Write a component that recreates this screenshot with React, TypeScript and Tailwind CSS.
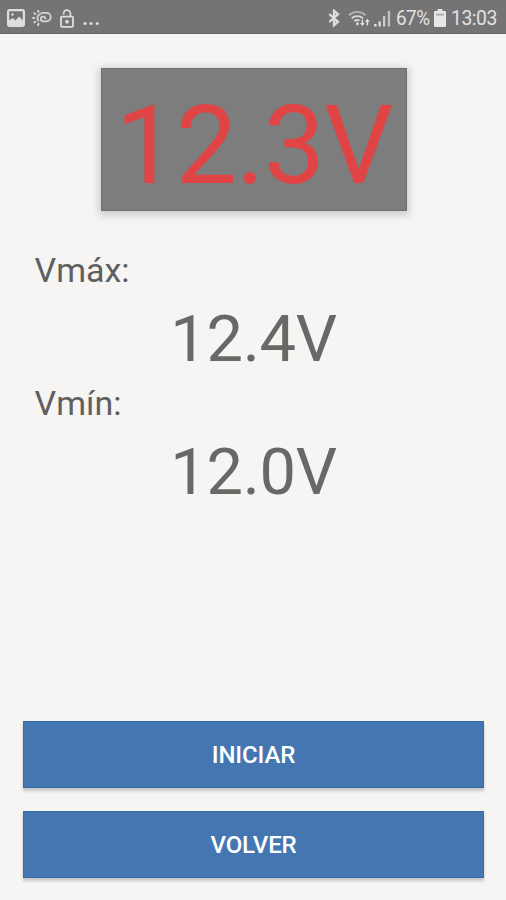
import React from 'react';

interface ReadingProps {
  label: string;
  value: string;
}

const PictureIcon = () => (
  <svg width="18" height="18" viewBox="0 0 18 18" fill="none">
    <rect x="1.1" y="1.1" width="15.8" height="15.8" rx="1.6" stroke="#dedede" strokeWidth="2.2" />
    <path d="M2 16v-4.5L6 9l2.5 2.5L12 7.5l4 4V16z" fill="#dedede" />
    <circle cx="5.5" cy="5.5" r="1.2" fill="#dedede" />
  </svg>
);

const WeatherIcon = () => (
  <svg width="20" height="18" viewBox="0 0 20 18" fill="none" stroke="#d6d6d6" strokeLinecap="round">
    <path d="M9.5 3.9h5a4.2 4.2 0 0 1 0 8.4h-3.3a2.3 2.3 0 1 1 2.2-2.8" strokeWidth="1.8" />
    <path d="M8.2 5.2a4 4 0 0 0-1.9 6.4" strokeWidth="1.8" />
    <path d="M6 1.8l.5 1M2.3 4.3l1 .7M1 9h1.2M2.3 13.5l1-.8M6 16l.5-1.1" strokeWidth="2" />
  </svg>
);

const UnlockIcon = () => (
  <svg width="14" height="19" viewBox="0 0 14 19" fill="none" stroke="#dedede">
    <path d="M3.6 5.4V4.5a3.4 3.4 0 0 1 6.8 0V7.5" strokeWidth="1.7" />
    <rect x="1" y="7.6" width="12" height="10.2" rx="1" strokeWidth="1.8" />
    <rect x="5.4" y="11" width="3.2" height="3.4" rx="1" fill="#dedede" stroke="none" />
  </svg>
);

const BluetoothIcon = () => (
  <svg width="12" height="18" viewBox="0 0 12 18" fill="none" stroke="#dedede" strokeWidth="2.3">
    <path d="M1.3 5l8.7 7.8-4 3.5V1.7l4 3.5L1.3 13" />
  </svg>
);

const WifiIcon = () => (
  <svg width="23" height="18" viewBox="0 0 23 18" fill="none">
    <path d="M1 6.2a12 12 0 0 1 16.5 0" stroke="#b5b5b5" strokeWidth="1.9" />
    <path d="M3.7 9.3a8.2 8.2 0 0 1 11.2 0M6.4 12.2a4.4 4.4 0 0 1 5 -.6" stroke="#d8d8d8" strokeWidth="1.9" />
    <circle cx="9.4" cy="14.8" r="1.5" fill="#d8d8d8" />
    <path d="M14.4 10.5v5M19.4 16.5v-5" stroke="#e2e2e2" strokeWidth="1.5" />
    <path d="M12 14h4.8l-2.4 3zM17 12.8h4.8l-2.4-3z" fill="#e2e2e2" />
  </svg>
);

const SignalIcon = () => (
  <svg width="18" height="17" viewBox="0 0 18 17">
    <path d="M1 16.5v-2.6h2.6v2.6zM5.5 16.5v-5h2.3v5z" fill="#dedede" />
    <path d="M10 16.5V6h2.3v10.5z" fill="#c9c9c9" />
    <path d="M14.8 16.5V1h2.3v15.5z" fill="#c2c2c2" />
  </svg>
);

const BatteryIcon = () => (
  <svg width="12" height="18" viewBox="0 0 12 18">
    <path d="M3.5 0h5v2H11q1 0 1 1v14q0 1-1 1H1q-1 0-1-1V3q0-1 1-1h2.5z" fill="#e6e6e6" />
    <path d="M2 4.6h8v2H2z" fill="#b0b0b0" />
  </svg>
);

const StatusBar = () => (
  <div className="flex h-[34px] items-center justify-between border-b border-[#686868] bg-[#747474] pr-[9px] pl-[7px] pt-[3px] text-[#e2e2e2]">
    <div className="flex items-center">
      <PictureIcon />
      <div className="ml-[7px]"><WeatherIcon /></div>
      <div className="ml-[8px]"><UnlockIcon /></div>
      <span className="ml-[8px] text-[22px] leading-[28px] font-medium">...</span>
    </div>
    <div className="flex items-center">
      <BluetoothIcon />
      <div className="ml-[8px]"><WifiIcon /></div>
      <div className="ml-[2px]"><SignalIcon /></div>
      <span className="ml-[5px] w-[35px] origin-left scale-x-90 text-[21px] leading-[28px] tracking-[-0.6px]">67%</span>
      <div className="ml-[3px]"><BatteryIcon /></div>
      <span className="ml-[5px] w-[46px] origin-left scale-x-92 text-[21px] leading-[28px] tracking-[-0.5px]">13:03</span>
    </div>
  </div>
);

const Reading: React.FC<ReadingProps> = ({ label, value }) => (
  <div className="h-[133px]">
    <div className="pl-[34.5px] text-[34px] leading-[40px] text-[#5f5f5f]">{label}</div>
    <div className="mt-[11px] pl-[1px] text-center text-[65px] leading-[76px] tracking-[-0.3px] text-[#686866]">{value}</div>
  </div>
);

const ActionButton: React.FC<{ label: string }> = ({ label }) => (
  <button className="h-[67px] w-full border border-[#386ba5] bg-[#4477b2] text-[24px] font-medium tracking-[-0.1px] text-white shadow-[0_3px_3px_rgba(0,0,0,0.2)]">
    {label}
  </button>
);

export default function App() {
  return (
    <div className="flex h-[900px] w-[506px] flex-col overflow-hidden bg-[#f6f5f3] font-[Roboto,sans-serif]">
      <StatusBar />

      <div className="mt-[34px] ml-[101px] h-[143px] w-[306px] border border-[#707070] bg-[#7d7d7d] pt-[13px] text-center shadow-[0_2px_8px_2px_rgba(0,0,0,0.18)]">
        <div className="text-[109px] leading-[129px] tracking-[-1px] whitespace-nowrap text-[#e04444]">12.3V</div>
      </div>

      <div className="mt-[39px]">
        <Reading label="Vmáx:" value="12.4V" />
        <Reading label="Vmín:" value="12.0V" />
      </div>

      <div className="mt-auto mb-[22px] ml-[23px] flex w-[461px] flex-col gap-[23px]">
        <ActionButton label="INICIAR" />
        <ActionButton label="VOLVER" />
      </div>
    </div>
  );
}
